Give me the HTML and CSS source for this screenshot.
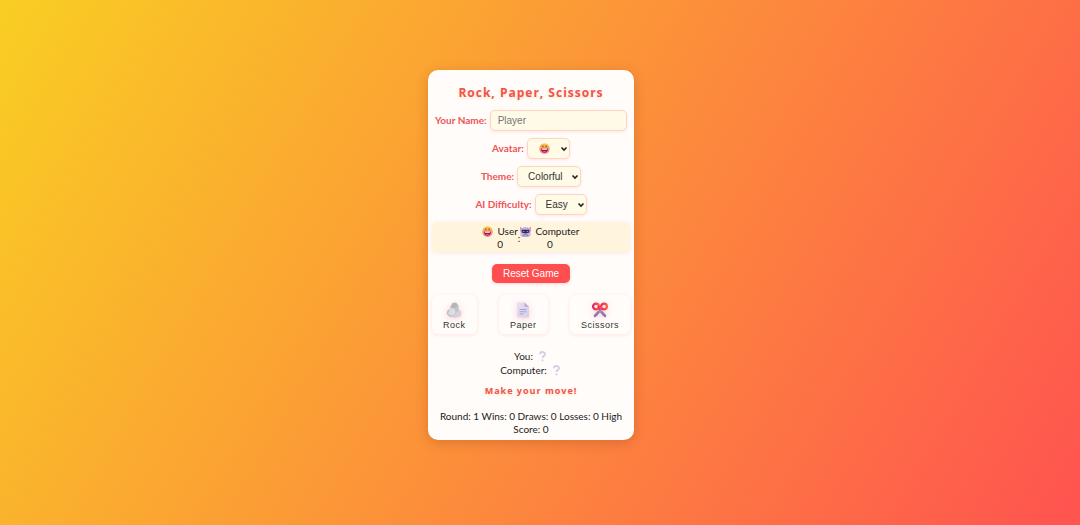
FILE: index.html
```html
<!DOCTYPE html>
<html lang="en">
<head>
<meta charset="utf-8">
<title>Rock, Paper, Scissors</title>
<meta name="viewport" content="width=device-width, initial-scale=1">
<link rel="stylesheet" href="styles.css">
</head>
<body>
<svg class="defs" aria-hidden="true">
  <defs>
    <linearGradient id="face" x1="0" y1="0" x2="0" y2="1"><stop offset="0" stop-color="#ffc83d"/><stop offset="1" stop-color="#f4708c"/></linearGradient>
    <linearGradient id="stone" x1="0" y1="0" x2="1" y2="1"><stop offset="0" stop-color="#a8a8ac"/><stop offset="1" stop-color="#e0dce4"/></linearGradient>
    <linearGradient id="sheet" x1="0" y1="0" x2="1" y2="1"><stop offset="0" stop-color="#e6e2f2"/><stop offset="1" stop-color="#d8cfea"/></linearGradient>
    <linearGradient id="handle" x1="0" y1="0" x2="1" y2="0"><stop offset="0" stop-color="#e0226a"/><stop offset="1" stop-color="#f9633f"/></linearGradient>
    <symbol id="grin" viewBox="0 0 20 20">
      <circle cx="10" cy="10" r="9.500" fill="url(#face)"/>
      <ellipse cx="7" cy="6.500" rx="1.200" ry="1.800" fill="#7b4840"/><ellipse cx="13" cy="6.500" rx="1.200" ry="1.800" fill="#7b4840"/>
      <path d="M3.500 10h13c0 4.500-3 7.500-6.500 7.500S3.500 14.500 3.500 10z" fill="#9a1440"/>
      <path d="M4.500 10h11l-1 2.200h-9z" fill="#fff"/>
      <path d="M6.500 15q3.500-2.200 7 0-1.500 2-3.500 2t-3.500-2z" fill="#ef4a9b"/>
    </symbol>
    <symbol id="robot" viewBox="0 0 20 20">
      <path d="M0 1l4 3v6H0zM20 1l-4 3v6h4z" fill="#ef8fba"/>
      <path d="M3 4q7-4 14 0l2 5v8l-3 3H4l-3-3V9z" fill="#c3b2e6"/>
      <path d="M3 7h14v5q-7 3-14 0z" fill="#342752"/>
      <path d="M5 9h3v1.500H5zM12 9h3v1.500h-3z" fill="#68c9f3"/>
      <path d="M6 15.500h8v3H6z" fill="#6b5a90"/><path d="M7 16.500h6v1H7z" fill="#eee"/>
    </symbol>
    <symbol id="rock" viewBox="0 0 32 32">
      <path d="M9 9l4-7 7-1 5 6v8l6 5-1 9-9 2-14-1-6-7 2-6 5-3z" fill="url(#stone)"/>
      <path d="M13 3l7-1 4 6-7 4-7-1z" fill="#b4b4b9"/><path d="M9 12l8 1 2 7-6 8-9-5z" fill="#dedde2"/><path d="M17 12l7-3 1 8-6 3z" fill="#c3c2c9"/><path d="M20 21l6-2 3 3-2 6-10 1z" fill="#d5d2da"/>
    </symbol>
    <symbol id="paper" viewBox="0 0 32 32">
      <path d="M4 1h15l9 9v21H4z" fill="url(#sheet)"/><path d="M19 1l9 9h-9z" fill="#bdaed9"/>
      <path d="M9 15h14M9 19.500h14M9 24h8" stroke="#a497c8" stroke-width="1.800"/>
    </symbol>
    <symbol id="scissors" viewBox="0 0 32 32">
      <path d="M12 16l5-2 12 13-2 4-4-2zM20 16l-5-2L3 27l2 4 4-2z" fill="#9379b6"/>
      <g fill="none" stroke="url(#handle)" stroke-width="4.500"><circle cx="8" cy="9" r="5.800"/><circle cx="24" cy="9" r="5.800"/><path d="M13 8q1 6 4 9M19 8q-1 6-4 9" stroke-width="3.500"/></g>
      <circle cx="16" cy="18" r="1.500" fill="#5d477d"/>
    </symbol>
    <symbol id="question" viewBox="0 0 20 20">
      <path d="M5.500 6c0-5.500 9-5.500 9-.5 0 4-4.500 3.500-4.500 7" fill="none" stroke="#d6cde9" stroke-width="3.500"/><circle cx="10" cy="17" r="2" fill="#d6cde9"/>
    </symbol>
    <symbol id="chevron" viewBox="0 0 8 6"><path d="M1.500 1.500L4 4l2.500-2.500" fill="none" stroke="#222" stroke-width="1.600"/></symbol>
  </defs>
</svg>
<main class="card">
  <h1 class="title">Rock, Paper, Scissors</h1>
  <form class="settings">
    <div class="field"><label for="name">Your Name:</label><input id="name" class="control name" type="text" placeholder="Player"></div>
    <div class="field"><label for="avatar">Avatar:</label>
      <span class="picker"><select id="avatar" class="control avatar"><option value="grin" aria-label="Grinning face"></option></select><svg class="emoji avatar-icon" aria-hidden="true"><use href="#grin"/></svg><svg class="chevron" aria-hidden="true"><use href="#chevron"/></svg></span></div>
    <div class="field"><label for="theme">Theme:</label>
      <span class="picker"><select id="theme" class="control"><option>Colorful</option></select><svg class="chevron" aria-hidden="true"><use href="#chevron"/></svg></span></div>
    <div class="field"><label for="level">AI Difficulty:</label>
      <span class="picker"><select id="level" class="control"><option>Easy</option></select><svg class="chevron" aria-hidden="true"><use href="#chevron"/></svg></span></div>
  </form>
  <section class="score">
    <div class="player"><span class="who"><svg class="emoji"><use href="#grin"/></svg>User</span><span>0</span></div>
    <span>:</span>
    <div class="player"><span class="who"><svg class="emoji"><use href="#robot"/></svg>Computer</span><span>0</span></div>
  </section>
  <button class="reset" type="button">Reset Game</button>
  <section class="choices">
    <button class="choice" type="button"><svg class="choice-icon"><use href="#rock"/></svg>Rock</button>
    <button class="choice" type="button"><svg class="choice-icon"><use href="#paper"/></svg>Paper</button>
    <button class="choice" type="button"><svg class="choice-icon"><use href="#scissors"/></svg>Scissors</button>
  </section>
  <section class="moves">
    <div class="move">You:<svg class="emoji"><use href="#question"/></svg></div>
    <div class="move">Computer:<svg class="emoji"><use href="#question"/></svg></div>
  </section>
  <p class="message">Make your move!</p>
  <footer class="stats">Round: 1 Wins: 0 Draws: 0 Losses: 0 High Score: 0</footer>
</main>
</body>
</html>
```
FILE: styles.css
```css
* { box-sizing: border-box; }
body {
  margin: 0;
  min-height: 100vh;
  padding: 0 18px 15px 0;
  display: flex;
  align-items: center;
  justify-content: center;
  background: linear-gradient(120deg, #f9ce23 0%, #ff5350 100%);
  font: 10px/13px "Segoe UI", Lato, "Open Sans", sans-serif;
  color: #222;
}
.defs { position: absolute; width: 0; height: 0; }
.card {
  width: 206px;
  padding: 14px 4px 4px;
  display: flex;
  flex-direction: column;
  align-items: center;
  border-radius: 10px;
  background: #fffcfa;
  box-shadow: 0 3px 12px rgba(120, 50, 20, 0.25);
}
.title {
  margin: 0 0 8px;
  font: 700 12px/18px "Segoe UI", "Open Sans", sans-serif;
  letter-spacing: 1px;
  color: #f0524f;
  text-shadow: 0 1px 3px #ffe3b8;
}
.settings { display: flex; flex-direction: column; gap: 7px; width: 100%; }
.field { display: flex; align-items: center; justify-content: center; gap: 3px; padding: 0 3px; }
.field label { flex: none; font-weight: 700; color: #ed5557; }
.control {
  height: 21px;
  padding: 0 17px 0 10px;
  border: 1px solid #ffd5c0;
  border-radius: 5px;
  background-color: #fffbe7;
  box-shadow: 0 1px 3px rgba(255, 78, 80, 0.15);
  font: 10px "Liberation Sans", Arial, sans-serif;
  color: #333;
  appearance: none;
}
.name { flex: 1; min-width: 0; padding: 0 7px; }
.picker { position: relative; display: flex; }
.chevron { position: absolute; right: 2px; top: 8px; width: 8px; height: 6px; pointer-events: none; }
.avatar { width: 43px; }
.emoji { width: 11px; height: 11px; flex: none; }
.avatar-icon { position: absolute; left: 12px; top: 5px; pointer-events: none; }
.score {
  width: 100%;
  margin-top: 7px;
  padding: 3px 0 1px;
  display: flex;
  align-items: center;
  justify-content: center;
  border-radius: 5px;
  background: #fff5dc;
  box-shadow: 0 1px 4px rgba(255, 78, 80, 0.12);
}
.player { display: flex; flex-direction: column; align-items: center; }
.who { display: flex; align-items: center; gap: 4px; }
.reset {
  margin: 12px 0;
  height: 19px;
  padding: 0 11px;
  border: 0;
  border-radius: 5px;
  background: #ff4e50;
  box-shadow: 0 1px 3px rgba(255, 78, 80, 0.25);
  font: 10px "Liberation Sans", Arial, sans-serif;
  color: #fff;
}
.choices { width: 100%; display: flex; justify-content: space-between; }
.choice {
  padding: 7px 11px 3px;
  display: flex;
  flex-direction: column;
  align-items: center;
  gap: 2px;
  border: 0;
  border-radius: 6px;
  background: #fffcfa;
  box-shadow: 0 1px 4px rgba(255, 78, 80, 0.14);
  font: 9px/11px "Liberation Sans", Arial, sans-serif;
  letter-spacing: 0.5px;
  color: #333;
}
.choice-icon { width: 16px; height: 16px; filter: drop-shadow(0 1px 3px rgba(255, 78, 80, 0.25)); }
.moves { margin-top: 16px; display: flex; flex-direction: column; align-items: center; gap: 1px; }
.move { display: flex; align-items: center; gap: 4px; }
.message {
  margin: 7px 0 13px;
  font: 700 9px/13px "Segoe UI", "Open Sans", sans-serif;
  letter-spacing: 1px;
  color: #f0524f;
  text-shadow: 0 1px 3px #ffe3b8;
}
.stats { padding: 0 4px; text-align: center; }
```
